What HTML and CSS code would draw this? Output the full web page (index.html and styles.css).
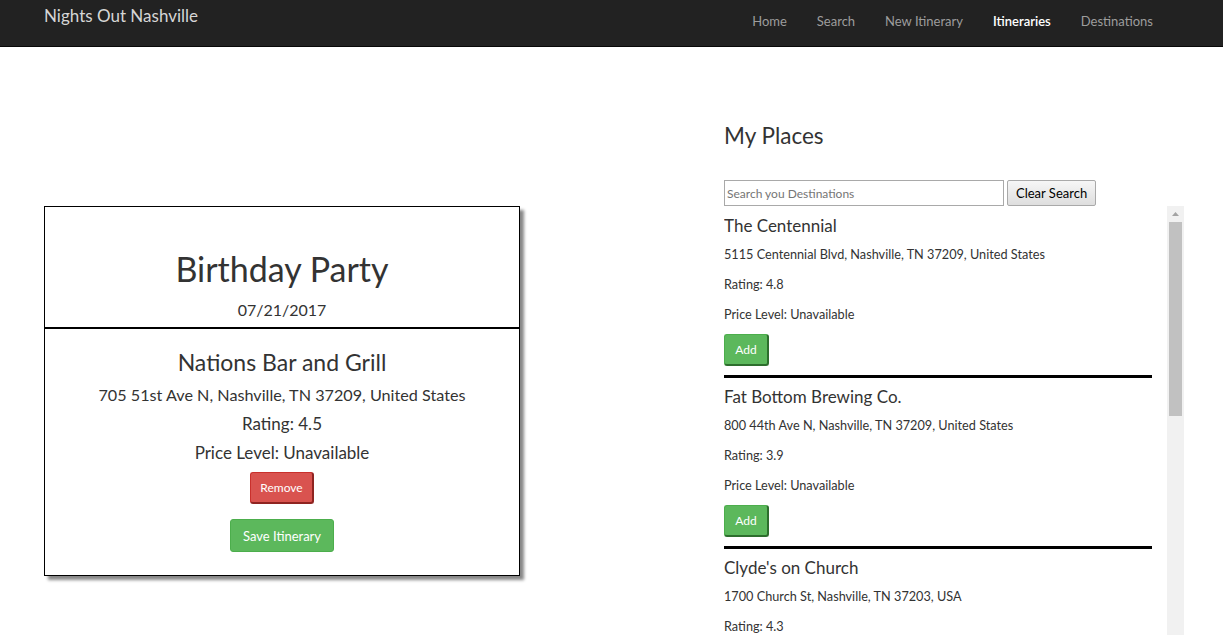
FILE: index.html
```html
<!DOCTYPE html>
<html>
<head>
<meta charset="utf-8">
<link rel="stylesheet" href="styles.css">
</head>
<body>
<nav class="navbar">
  <a class="brand" href="#">Nights Out Nashville</a>
  <ul class="nav">
    <li><a href="#">Home</a></li>
    <li><a href="#">Search</a></li>
    <li><a href="#">New Itinerary</a></li>
    <li><a class="active" href="#">Itineraries</a></li>
    <li><a href="#">Destinations</a></li>
  </ul>
</nav>
<main class="page">
  <section class="left">
    <div class="card">
      <div class="card-head">
        <h1 class="title">Birthday Party</h1>
        <div class="date">07/21/2017</div>
      </div>
      <div class="card-body">
        <h2 class="place">Nations Bar and Grill</h2>
        <p class="line address">705 51st Ave N, Nashville, TN 37209, United States</p>
        <p class="line">Rating: 4.5</p>
        <p class="line">Price Level: Unavailable</p>
        <button class="btn btn-remove">Remove</button>
        <button class="btn btn-save">Save Itinerary</button>
      </div>
    </div>
  </section>
  <section class="right">
    <h2 class="heading">My Places</h2>
    <div class="search">
      <input class="search-input" type="text" placeholder="Search you Destinations">
      <button class="clear">Clear Search</button>
    </div>
    <div class="list">
      <div class="items">
        <div class="item">
          <h3 class="item-title">The Centennial</h3>
          <p class="item-line">5115 Centennial Blvd, Nashville, TN 37209, United States</p>
          <p class="item-line">Rating: 4.8</p>
          <p class="item-line">Price Level: Unavailable</p>
          <button class="btn btn-add">Add</button>
        </div>
        <div class="item">
          <h3 class="item-title">Fat Bottom Brewing Co.</h3>
          <p class="item-line">800 44th Ave N, Nashville, TN 37209, United States</p>
          <p class="item-line">Rating: 3.9</p>
          <p class="item-line">Price Level: Unavailable</p>
          <button class="btn btn-add">Add</button>
        </div>
        <div class="item">
          <h3 class="item-title">Clyde's on Church</h3>
          <p class="item-line">1700 Church St, Nashville, TN 37203, USA</p>
          <p class="item-line">Rating: 4.3</p>
          <p class="item-line">Price Level: Unavailable</p>
          <button class="btn btn-add">Add</button>
        </div>
      </div>
      <div class="scrollbar" aria-hidden="true">
        <div class="scroll-up">
          <svg width="17" height="16" viewBox="0 0 17 16"><polygon points="5,10 12,10 8.5,6" fill="#a3a3a3"/></svg>
        </div>
        <div class="scroll-thumb"></div>
      </div>
    </div>
  </section>
</main>
</body>
</html>
```

FILE: styles.css
```css
* { box-sizing: border-box; }
html, body { margin: 0; height: 100%; overflow: hidden; }
body {
  font-family: "Lato", "Open Sans", sans-serif;
  color: #333;
  background: #fff;
}
.navbar {
  height: 47px;
  background: #222;
  border-bottom: 1px solid #080808;
  display: flex;
  align-items: flex-start;
  padding: 0 70px 0 44px;
}
.brand {
  color: #d6d6d6;
  text-decoration: none;
  font-size: 17px;
  line-height: 32px;
}
.nav {
  list-style: none;
  margin: 0 0 0 auto;
  padding: 0;
  display: flex;
  gap: 30px;
}
.nav a {
  display: block;
  color: #9d9d9d;
  text-decoration: none;
  font-size: 13px;
  line-height: 43px;
}
.nav a.active { color: #fff; font-weight: 600; }

.page {
  display: flex;
  padding-left: 44px;
}
.left { width: 476px; padding-top: 159px; }
.card {
  border: 1px solid #000;
  box-shadow: 4px 4px 3px #888;
  background: #fff;
  text-align: center;
}
.card-head {
  height: 122px;
  border-bottom: 2px solid #000;
  padding-top: 42px;
}
.title {
  margin: 0;
  font-size: 34px;
  font-weight: normal;
  line-height: 40px;
  color: #333;
}
.date { font-size: 16px; line-height: 22px; margin-top: 10px; }
.card-body {
  padding: 18px 0 23px;
  display: flex;
  flex-direction: column;
  align-items: center;
}
.place {
  margin: 0;
  font-size: 23px;
  font-weight: normal;
  line-height: 30px;
  color: #333;
}
.line { margin: 0; font-size: 17px; line-height: 29px; }
.line.address { margin-top: 3px; font-size: 16.2px; }
.btn {
  font-family: inherit;
  color: #fff;
  border: 1px solid transparent;
  border-radius: 3px;
  cursor: pointer;
}
.btn-remove {
  margin-top: 5px;
  width: 64px;
  height: 32px;
  font-size: 12px;
  background: #d9534f;
  border-color: #c9302c;
  border-right: 2px solid #8f2421;
  border-bottom: 2px solid #8f2421;
}
.btn-save {
  margin-top: 15px;
  width: 104px;
  height: 33px;
  font-size: 13px;
  background: #5cb85c;
  border-color: #4cae4c;
}

.right { margin-left: 204px; width: 460px; }
.heading {
  margin: 74px 0 0;
  font-size: 22.5px;
  font-weight: normal;
  line-height: 30px;
  color: #333;
}
.search { display: flex; gap: 3px; margin-top: 29px; }
.search-input {
  width: 280px;
  height: 26px;
  border: 1px solid #a9a9a9;
  font-family: inherit;
  font-size: 12px;
  padding: 0 2px;
}
.search-input::placeholder { color: #757575; }
.clear {
  height: 26px;
  padding: 0 8px;
  font-family: inherit;
  font-size: 13px;
  color: #000;
  background: linear-gradient(#f6f6f6, #dedede);
  border: 1px solid #a9a9a9;
  border-radius: 2px;
}
.list {
  display: flex;
  height: 429px;
  overflow: hidden;
}
.items { width: 428px; flex: none; }
.scrollbar {
  margin-left: 15px;
  width: 17px;
  flex: none;
  background: #f1f1f1;
  display: flex;
  flex-direction: column;
}
.scroll-up { height: 16px; }
.scroll-up svg { display: block; }
.scroll-thumb {
  height: 194px;
  margin: 0 2px;
  background: #c1c1c1;
}
.item {
  border-bottom: 3px solid #000;
  padding: 9px 0 9px;
}
.item + .item { padding-top: 8px; }
.item-title {
  margin: 0;
  font-size: 17px;
  font-weight: normal;
  line-height: 22px;
  color: #333;
}
.item-line {
  margin: 6px 0 0;
  font-size: 12.7px;
  line-height: 23px;
}
.item-line + .item-line { margin-top: 7px; }
.btn-add {
  margin-top: 8px;
  width: 45px;
  height: 32px;
  font-size: 12px;
  background: #5cb85c;
  border-color: #4cae4c;
  border-right: 2px solid #2d6e2d;
  border-bottom: 2px solid #2d6e2d;
}
```
